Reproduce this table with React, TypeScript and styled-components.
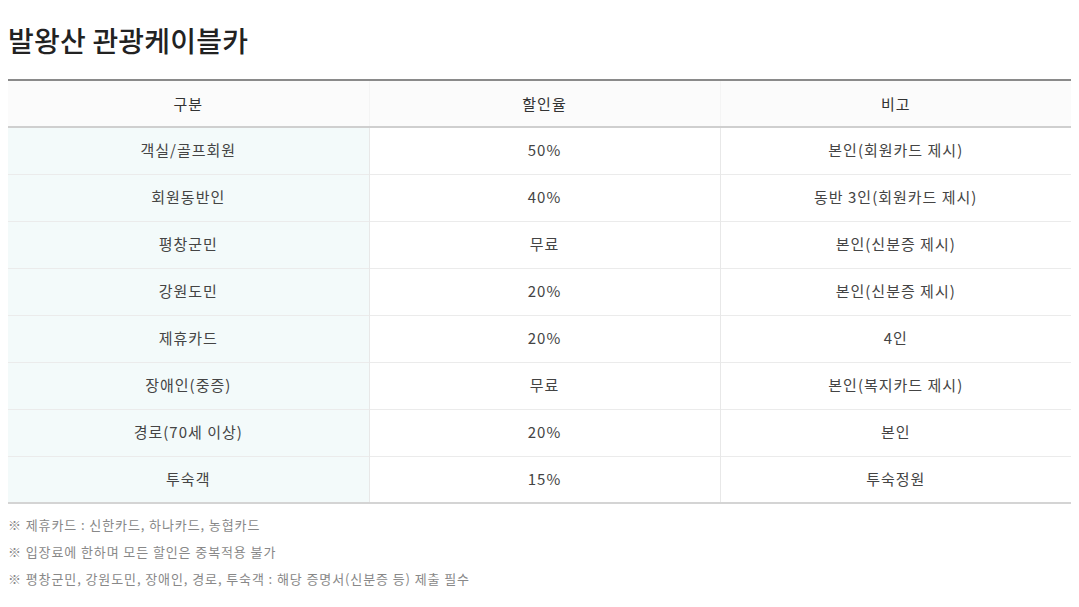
import styled, { createGlobalStyle } from 'styled-components'

const GlobalStyle = createGlobalStyle`
    body {
        margin: 0;
        background: #fff;
        font-family: "Noto Sans CJK KR", "Noto Sans", sans-serif;
    }
`

const Page = styled.div`
    padding: 20px 8px 0 8px;
    width: 1063px;
`

const Title = styled.h2`
    margin: 0 0 19px 0;
    font-size: 28px;
    font-weight: 500;
    line-height: 40px;
    color: #222;
    letter-spacing: 0.2px;
`

const Table = styled.table`
    width: 1063px;
    border-collapse: collapse;
    table-layout: fixed;
    border-top: 2px solid #8a8a8a;
    border-bottom: 2px solid #d4d4d4;
`

const HeadCell = styled.th`
    height: 45px;
    background: #fbfbfb;
    border-bottom: 2px solid #cfcfcf;
    border-left: 1px solid #f4f4f4;
    font-size: 15px;
    font-weight: 400;
    letter-spacing: 1px;
    color: #333;
    text-align: center;
    padding: 0;

    &:first-child {
        border-left: none;
    }
`

const Cell = styled.td<{ $label?: boolean }>`
    box-sizing: border-box;
    height: 47px;
    padding: 0 0 2px 0;
    text-align: center;
    font-size: 15px;
    letter-spacing: 1px;
    color: #444;
    background: ${(p) => (p.$label ? '#f3fafa' : '#fff')};
    border-top: 1px solid #ebebeb;
    border-left: 1px solid #e8e8e8;

    &:first-child {
        border-left: none;
    }
`

const Notes = styled.ul`
    list-style: none;
    margin: 7px 0 0 0;
    padding: 0;
`

const Note = styled.li`
    font-size: 13px;
    line-height: 27px;
    letter-spacing: 0.9px;
    color: #888;
`

const rows: [string, string, string][] = [
    ['객실/골프회원', '50%', '본인(회원카드 제시)'],
    ['회원동반인', '40%', '동반 3인(회원카드 제시)'],
    ['평창군민', '무료', '본인(신분증 제시)'],
    ['강원도민', '20%', '본인(신분증 제시)'],
    ['제휴카드', '20%', '4인'],
    ['장애인(중증)', '무료', '본인(복지카드 제시)'],
    ['경로(70세 이상)', '20%', '본인'],
    ['투숙객', '15%', '투숙정원'],
]

const notes = [
    '제휴카드 : 신한카드, 하나카드, 농협카드',
    '입장료에 한하며 모든 할인은 중복적용 불가',
    '평창군민, 강원도민, 장애인, 경로, 투숙객 : 해당 증명서(신분증 등) 제출 필수',
]

export default function App() {
    return (
        <Page>
            <GlobalStyle />
            <Title>발왕산 관광케이블카</Title>
            <Table>
                <colgroup>
                    <col style={{ width: 361 }} />
                    <col style={{ width: 351 }} />
                    <col style={{ width: 351 }} />
                </colgroup>
                <thead>
                    <tr>
                        <HeadCell>구분</HeadCell>
                        <HeadCell>할인율</HeadCell>
                        <HeadCell>비고</HeadCell>
                    </tr>
                </thead>
                <tbody>
                    {rows.map(([label, rate, memo]) => (
                        <tr key={label}>
                            <Cell $label>{label}</Cell>
                            <Cell>{rate}</Cell>
                            <Cell>{memo}</Cell>
                        </tr>
                    ))}
                </tbody>
            </Table>
            <Notes>
                {notes.map((n) => (
                    <Note key={n}>※ {n}</Note>
                ))}
            </Notes>
        </Page>
    )
}
